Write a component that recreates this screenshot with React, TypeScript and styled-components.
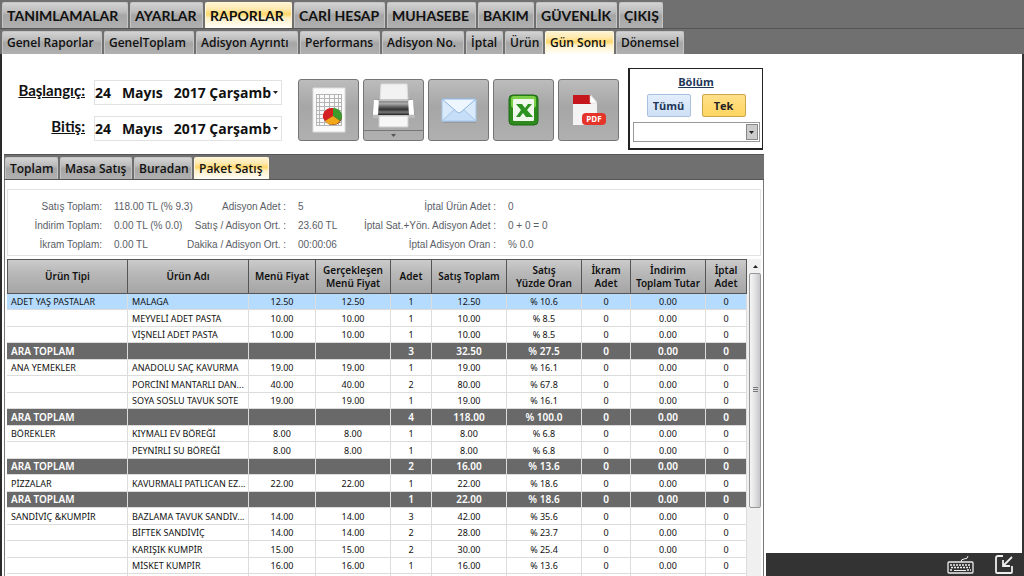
import React from "react";
import styled, { createGlobalStyle, css } from "styled-components";

const Global = createGlobalStyle`
  *, *::before, *::after { box-sizing: border-box; }
  body { margin: 0; background: #fff; font-family: "Open Sans", "Noto Sans", sans-serif; color: #111; }
  button, input, select { font: inherit; color: inherit; margin: 0; }
`;

const silver = "linear-gradient(#d3d3d3 0%, #bcbcbc 35%, #a6a6a6 50%, #b0b0b0 100%)";
const gold = "linear-gradient(#fff3d2 0%, #ffe9ae 25%, #ffd76a 45%, #fff0c4 60%, #fffefa 100%)";

const Page = styled.div`
  display: flex;
  flex-direction: column;
  height: 100vh;
  overflow: hidden;
`;

const TabBar = styled.nav<{ $level: "main" | "sub" | "inner" }>`
  display: flex;
  gap: 2px;
  background: #707070;
  font-weight: 600;
  white-space: nowrap;
  ${(p) =>
    p.$level === "main" &&
    css`
      height: 29px;
      padding: 2px 2px 0;
      border-bottom: 1px solid #555;
      font-family: Lato, sans-serif;
      font-size: 14px;
      font-weight: 700;
    `}
  ${(p) =>
    p.$level === "sub" &&
    css`
      height: 25px;
      padding: 2px 2px 0;
      font-size: 12px;
    `}
  ${(p) =>
    p.$level === "inner" &&
    css`
      height: 26px;
      padding: 2px 1px 0;
      border-top: 1px solid #555;
      border-bottom: 1px solid #555;
      font-size: 12px;
    `}
`;

const Tab = styled.button<{ $width: number; $active?: boolean }>`
  width: ${(p) => p.$width}px;
  height: 100%;
  padding: 0 0 0 4px;
  border: 1px solid ${(p) => (p.$active ? "#fff6dc" : "#c4c4c4")};
  border-bottom: 0;
  border-radius: 2px 2px 0 0;
  background: ${(p) => (p.$active ? gold : silver)};
  line-height: 20px;
  text-align: left;
`;

const Body = styled.div`
  flex: 1;
  min-height: 0;
  display: grid;
  grid-template-columns: minmax(0, 1fr) 258px;
`;

const Main = styled.main`
  display: flex;
  flex-direction: column;
  min-height: 0;
  padding: 0 2px;
  border-left: 2px solid #2a2a2a;
`;

const Aside = styled.aside`
  display: flex;
  flex-direction: column;
  justify-content: flex-end;
  border-right: 2px solid #333;
`;

const StatusBar = styled.footer`
  display: flex;
  justify-content: flex-end;
  align-items: center;
  gap: 20px;
  height: 23px;
  padding-right: 8px;
  background: #333;
`;

const IconButton = styled.button`
  display: flex;
  padding: 0;
  border: 0;
  background: none;
`;

const Filters = styled.section`
  display: flex;
  height: 100px;
  padding: 14px 1px 0 13px;
`;

const Dates = styled.div`
  display: grid;
  grid-template-columns: 68px 188px;
  grid-auto-rows: 25px;
  gap: 11px 9px;
  padding-top: 12px;
`;

const DateLabel = styled.label`
  font-family: Lato, sans-serif;
  font-size: 15px;
  font-weight: 700;
  line-height: 20px;
  text-align: right;
  text-decoration: underline;
`;

const DateBox = styled.div`
  display: flex;
  align-items: center;
  gap: 2px;
  border: 1px solid #e2e2e2;
  padding-right: 3px;
`;

const DateInput = styled.input`
  flex: 1;
  min-width: 0;
  height: 23px;
  padding: 0;
  border: 0;
  background: none;
  font-size: 14px;
  font-weight: 700;
  white-space: pre;
`;

const Tools = styled.div`
  display: flex;
  gap: 4px;
  padding: 11px 0 0 16px;
`;

const Tool = styled.button`
  display: flex;
  align-items: center;
  justify-content: center;
  width: 61px;
  height: 62px;
  padding: 0;
  border: 1px solid #757575;
  border-radius: 3px;
  background: linear-gradient(#bcbcbc, #a6a6a6 45%, #b0b0b0);
`;

const Section = styled.fieldset`
  display: grid;
  grid-template-columns: 44px 44px;
  grid-template-rows: 15px 23px 20px;
  justify-content: center;
  gap: 5px 11px;
  width: 135px;
  height: 82px;
  margin: 0 0 0 auto;
  padding: 5px 2px;
  border: 1px solid #222;
  border-left-width: 2px;
  border-bottom-width: 2px;
`;

const SectionTitle = styled.div`
  grid-column: 1 / -1;
  color: #1d3557;
  font-size: 11px;
  font-weight: 700;
  line-height: 16px;
  text-align: center;
  text-decoration: underline;
`;

const Choice = styled.button<{ $on?: boolean }>`
  padding: 0;
  border: 1px solid ${(p) => (p.$on ? "#c9a64e" : "#a9c1de")};
  border-radius: 2px;
  background: ${(p) => (p.$on ? "linear-gradient(#ffe08a, #ffd560)" : "linear-gradient(#e3eefb, #cfe0f5)")};
  color: ${(p) => (p.$on ? "#222" : "#1d3557")};
  font-size: 11px;
  font-weight: 700;
  line-height: 16px;
`;

const Combo = styled.div`
  display: grid;
  grid-template-columns: 1fr 12px;
  grid-column: 1 / -1;
  margin: 0 -14px;
  padding: 1px;
  border: 1px solid #999;
  align-items: center;
`;

const ComboSelect = styled.select`
  grid-area: 1 / 1 / 2 / 3;
  appearance: none;
  height: 16px;
  border: 0;
  background: none;
`;

const ComboArrow = styled.span`
  grid-area: 1 / 2;
  display: flex;
  align-items: center;
  justify-content: center;
  height: 16px;
  border: 1px solid #888;
  background: #ccc;
  pointer-events: none;
`;

const Report = styled.section`
  flex: 1;
  min-height: 0;
  display: flex;
  flex-direction: column;
  border: 1px solid #777;
  border-top: 0;
  border-bottom: 0;
  padding: 9px 2px 0;
`;

const Summary = styled.dl`
  display: grid;
  grid-template-columns: 94px 78px 98px 61px 141px 1fr;
  grid-auto-rows: 19px;
  column-gap: 4px;
  height: 67px;
  margin: 0 0 3px;
  padding: 7px 0 0;
  border: 1px solid #e2e2e2;
  color: #5a5e66;
  font-family: "Liberation Sans", Arial, sans-serif;
  font-size: 10px;
  line-height: 19px;
  white-space: nowrap;
`;

const Term = styled.dt`
  display: flex;
  justify-content: flex-end;
`;

const Value = styled.dd`
  margin: 0 0 0 8px;
`;

const TableArea = styled.div`
  flex: 1;
  min-height: 0;
  display: grid;
  grid-template-columns: minmax(0, 1fr) 14px;
  overflow: hidden;
`;

const Clip = styled.div`
  min-height: 0;
  overflow: hidden;
`;

const Table = styled.table`
  width: 100%;
  table-layout: fixed;
  border-collapse: separate;
  border-spacing: 0;
  font-family: "Noto Sans", "Open Sans", sans-serif;
  font-size: 9px;
`;

const HeadCell = styled.th`
  height: 35px;
  padding: 0;
  border: 1px solid #555;
  border-left-width: 0;
  background: linear-gradient(#cbcbcb, #b8b8b8 40%, #a5a5a5);
  font-size: 10px;
  font-weight: 600;
  line-height: 13px;
  white-space: pre-line;
  &:first-child { border-left-width: 1px; }
`;

const Row = styled.tr<{ $kind: "item" | "selected" | "total" }>`
  height: 16px;
  &:nth-child(even) { height: 17px; }
  ${(p) => p.$kind === "selected" && css`background: #b5dbff;`}
  ${(p) => p.$kind === "total" && css`
    background: #696969;
    color: #fff;
    font-weight: 600;
    font-size: 10px;
  `}
`;

const Cell = styled.td<{ $left?: boolean }>`
  padding: ${(p) => (p.$left ? "0 0 0 4px" : "0 4px")};
  border-right: 1px solid #dcdcdc;
  border-bottom: 1px solid #dcdcdc;
  line-height: 15px;
  text-align: ${(p) => (p.$left ? "left" : "center")};
  overflow: hidden;
  white-space: nowrap;
`;

const Scrollbar = styled.div`
  display: flex;
  flex-direction: column;
  align-items: center;
  padding-left: 2px;
  background: #f0f0f0;
`;

const ScrollUp = styled.button`
  display: flex;
  align-items: center;
  justify-content: center;
  width: 100%;
  height: 14px;
  padding: 0;
  border: 0;
  background: none;
`;

const Thumb = styled.div`
  display: flex;
  align-items: center;
  justify-content: center;
  width: 100%;
  height: 74%;
  border: 1px solid #979797;
  border-radius: 2px;
  background: linear-gradient(90deg, #f5f5f5, #e4e4e6 45%, #c6c6ca);
`;

const mainTabs: [string, number][] = [
  ["TANIMLAMALAR", 126], ["AYARLAR", 73], ["RAPORLAR", 87], ["CARİ HESAP", 91],
  ["MUHASEBE", 89], ["BAKIM", 56], ["GÜVENLİK", 81], ["ÇIKIŞ", 44],
];
const subTabs: [string, number][] = [
  ["Genel Raporlar", 100], ["GenelToplam", 90], ["Adisyon Ayrıntı", 102], ["Performans", 80],
  ["Adisyon No.", 82], ["İptal", 37], ["Ürün", 38], ["Gün Sonu", 69], ["Dönemsel", 68],
];
const innerTabs: [string, number][] = [
  ["Toplam", 53], ["Masa Satış", 72], ["Buradan", 58], ["Paket Satış", 75],
];

const summary = [
  ["Satış Toplam:", "118.00 TL (% 9.3)"], ["Adisyon Adet :", "5"], ["İptal Ürün Adet :", "0"],
  ["İndirim Toplam:", "0.00 TL (% 0.0)"], ["Satış / Adisyon Ort. :", "23.60 TL"], ["İptal Sat.+Yön. Adisyon Adet :", "0 + 0 = 0"],
  ["İkram Toplam:", "0.00 TL"], ["Dakika / Adisyon Ort. :", "00:00:06"], ["İptal Adisyon Oran :", "% 0.0"],
];

const columns: [string, number][] = [
  ["Ürün Tipi", 121], ["Ürün Adı", 121], ["Menü Fiyat", 67], ["Gerçekleşen\nMenü Fiyat", 75], ["Adet", 41],
  ["Satış Toplam", 75], ["Satış\nYüzde Oran", 75], ["İkram\nAdet", 49], ["İndirim\nToplam Tutar", 75], ["İptal\nAdet", 41],
];

type Line = { type?: string; name?: string; price?: string; count: string; sum: string; rate: string };

const lines: Line[] = [
  { type: "ADET YAŞ PASTALAR", name: "MALAGA", price: "12.50", count: "1", sum: "12.50", rate: "% 10.6" },
  { name: "MEYVELİ ADET PASTA", price: "10.00", count: "1", sum: "10.00", rate: "% 8.5" },
  { name: "VİŞNELİ ADET PASTA", price: "10.00", count: "1", sum: "10.00", rate: "% 8.5" },
  { type: "ARA TOPLAM", count: "3", sum: "32.50", rate: "% 27.5" },
  { type: "ANA YEMEKLER", name: "ANADOLU SAÇ KAVURMA", price: "19.00", count: "1", sum: "19.00", rate: "% 16.1" },
  { name: "PORCİNİ MANTARLI DAN...", price: "40.00", count: "2", sum: "80.00", rate: "% 67.8" },
  { name: "SOYA SOSLU TAVUK SOTE", price: "19.00", count: "1", sum: "19.00", rate: "% 16.1" },
  { type: "ARA TOPLAM", count: "4", sum: "118.00", rate: "% 100.0" },
  { type: "BÖREKLER", name: "KIYMALI EV BÖREĞİ", price: "8.00", count: "1", sum: "8.00", rate: "% 6.8" },
  { name: "PEYNİRLİ SU BÖREĞİ", price: "8.00", count: "1", sum: "8.00", rate: "% 6.8" },
  { type: "ARA TOPLAM", count: "2", sum: "16.00", rate: "% 13.6" },
  { type: "PİZZALAR", name: "KAVURMALI PATLICAN EZ...", price: "22.00", count: "1", sum: "22.00", rate: "% 18.6" },
  { type: "ARA TOPLAM", count: "1", sum: "22.00", rate: "% 18.6" },
  { type: "SANDİVİÇ &KUMPİR", name: "BAZLAMA TAVUK SANDİV...", price: "14.00", count: "3", sum: "42.00", rate: "% 35.6" },
  { name: "BİFTEK SANDİVİÇ", price: "14.00", count: "2", sum: "28.00", rate: "% 23.7" },
  { name: "KARIŞIK KUMPİR", price: "15.00", count: "2", sum: "30.00", rate: "% 25.4" },
  { name: "MİSKET KUMPİR", price: "16.00", count: "1", sum: "16.00", rate: "% 13.6" },
];

const Arrow = ({ up }: { up?: boolean }) => (
  <svg width="5" height="3" viewBox="0 0 5 3"><path d={up ? "M0 3 2.5 0 5 3z" : "M0 0h5L2.5 3z"} fill="#222" /></svg>
);

const ChartIcon = () => (
  <svg width="34" height="46" viewBox="0 0 34 46">
    <path d="M1 1h32v44H1z" fill="#fafafa" stroke="#ddd" />
    <path d="M4 7.500h26M4 11.500h26M4 15.500h26M4 19.500h26M4 23.500h26M4 27.500h26M4 31.500h26M4 35.500h26M4 38.500h26M4.500 7v31M7.500 7v31M12.500 7v31M17.500 7v31M22.500 7v31M26.500 7v31M29.500 7v31" stroke="#b5b5b5" fill="none" />
    <ellipse cx="21" cy="30" rx="9" ry="8" fill="#7a2a12" />
    <path d="M21 29 13 34A9 8 0 0 1 21 21z" fill="#d42020" />
    <path d="M21 29V21A9 8 0 0 1 28 34z" fill="#3f9a2c" />
    <path d="M21 29 28 34A9 8 0 0 1 13 34z" fill="#f3a81c" />
  </svg>
);

const PrinterIcon = () => (
  <svg width="59" height="60" viewBox="0 0 59 60">
    <defs>
      <linearGradient id="drum" x1="0" x2="0" y1="0" y2="1">
        <stop offset="0" stopColor="#888" /><stop offset=".2" stopColor="#aaa" /><stop offset=".4" stopColor="#666" /><stop offset=".6" stopColor="#333" /><stop offset=".8" stopColor="#777" /><stop offset="1" stopColor="#222" />
      </linearGradient>
    </defs>
    <path d="M17 4h26l1 17H16z" fill="#f2f2f2" stroke="#ddd" />
    <path d="M11 20h37l3 16H8z" fill="#ececec" stroke="#999" />
    <path d="M15 21h29l1 14H14z" fill="url(#drum)" />
    <path d="M10 20h4v14H9zM45 20h4l1 14h-5z" fill="#fff" />
    <path d="M9 35h42v3H9z" fill="#bbb" />
    <path d="M15 36h29v11H15z" fill="#f7f7f7" stroke="#ccc" />
    <path d="M0 50.500h59" stroke="#777" />
    <path d="M27 54h5l-2.500 3z" fill="#555" />
  </svg>
);

const MailIcon = () => (
  <svg width="36" height="26" viewBox="0 0 36 26">
    <path d="M2 24h33v2H2z" fill="#888" opacity=".5" />
    <path d="M1 2h34v22H1z" fill="#d9eafb" stroke="#a7c5e6" />
    <path d="M1 24 14 12h8l13 12z" fill="#c6def7" stroke="#a5c6ea" />
    <path d="M1 2h34L20 15q-2 2-4 0z" fill="#eef7ff" stroke="#8fb4dd" />
  </svg>
);

const ExcelIcon = () => (
  <svg width="32" height="34" viewBox="0 0 32 34">
    <rect x="1" y="2" width="29" height="30" rx="4" fill="#2f8a1e" stroke="#1c6b12" />
    <rect x="3" y="3" width="25" height="12" rx="3" fill="#7ed04a" />
    <rect x="5" y="6" width="21" height="22" rx="1" fill="#f1f8ec" />
    <path d="M8 11h6l3 4 3-4h4l-5 6 6 7h-7l-3-4-3 4H8l5-7z" fill="#2c9320" />
  </svg>
);

const PdfIcon = () => (
  <svg width="36" height="34" viewBox="0 0 36 34">
    <path d="M2 2h18l6 7v23H2z" fill="#f3f3f3" />
    <path d="M2 2h18v9H2z" fill="#c4161c" />
    <path d="M19 2l7 8h-7z" fill="#fff" stroke="#ccc" strokeWidth=".5" />
    <rect x="11" y="20" width="24" height="12" rx="4" fill="#e5352b" />
    <text x="23" y="29" textAnchor="middle" fill="#fff" fontSize="8" fontWeight="700" fontFamily="Open Sans, sans-serif">PDF</text>
  </svg>
);

const KeyboardIcon = () => (
  <svg width="28" height="18" viewBox="0 0 28 18" fill="none" stroke="#eee">
    <rect x="1" y="6" width="25" height="11" rx="1" strokeWidth="1.300" />
    <path d="M14 6q0-3 3-3 4 0 4-3" />
    <path d="M3 9h21M4 11.500h19M3 14h3M20 14h4" strokeWidth="1.500" strokeDasharray="2 1" />
    <path d="M7 14.500h12" />
  </svg>
);

const DockIcon = () => (
  <svg width="19" height="19" viewBox="0 0 19 19" fill="none" stroke="#eee" strokeWidth="1.800">
    <path d="M8 1H3Q1 1 1 3v14q0 1 1 1h14q1 0 1-1v-6" />
    <path d="M17 2 8 11M8 5v6h7" />
  </svg>
);

const Tabs = ({ level, tabs, active }: { level: "main" | "sub" | "inner"; tabs: [string, number][]; active: string }) => (
  <TabBar $level={level}>
    {tabs.map(([name, width]) => (
      <Tab key={name} $width={width} $active={name === active}>{name}</Tab>
    ))}
  </TabBar>
);

const DateField = ({ id, label }: { id: string; label: string }) => (
  <>
    <DateLabel htmlFor={id}>{label}</DateLabel>
    <DateBox>
      <DateInput id={id} defaultValue="24   Mayıs   2017 Çarşamba" />
      <Arrow />
    </DateBox>
  </>
);

export default function App() {
  return (
    <Page lang="tr">
      <Global />
      <Tabs level="main" tabs={mainTabs} active="RAPORLAR" />
      <Tabs level="sub" tabs={subTabs} active="Gün Sonu" />
      <Body>
        <Main>
          <Filters>
            <Dates>
              <DateField id="start" label="Başlangıç:" />
              <DateField id="end" label="Bitiş:" />
            </Dates>
            <Tools>
              <Tool aria-label="Grafik"><ChartIcon /></Tool>
              <Tool aria-label="Yazdır"><PrinterIcon /></Tool>
              <Tool aria-label="E-posta"><MailIcon /></Tool>
              <Tool aria-label="Excel"><ExcelIcon /></Tool>
              <Tool aria-label="PDF"><PdfIcon /></Tool>
            </Tools>
            <Section aria-labelledby="section-title">
              <SectionTitle id="section-title">Bölüm</SectionTitle>
              <Choice>Tümü</Choice>
              <Choice $on>Tek</Choice>
              <Combo>
                <ComboSelect aria-label="Bölüm"><option value="" /></ComboSelect>
                <ComboArrow><Arrow /></ComboArrow>
              </Combo>
            </Section>
          </Filters>
          <Tabs level="inner" tabs={innerTabs} active="Paket Satış" />
          <Report>
            <Summary>
              {summary.map(([term, value]) => (
                <React.Fragment key={term}>
                  <Term>{term}</Term>
                  <Value>{value}</Value>
                </React.Fragment>
              ))}
            </Summary>
            <TableArea>
              <Clip>
                <Table>
                  <colgroup>
                    {columns.map(([name, width]) => <col key={name} style={{ width }} />)}
                  </colgroup>
                  <thead>
                    <tr>{columns.map(([name]) => <HeadCell key={name}>{name}</HeadCell>)}</tr>
                  </thead>
                  <tbody>
                    {lines.map((l, i) => (
                      <Row key={i} $kind={i === 0 ? "selected" : l.name ? "item" : "total"}>
                        <Cell $left>{l.type}</Cell>
                        <Cell $left>{l.name}</Cell>
                        <Cell>{l.price}</Cell>
                        <Cell>{l.price}</Cell>
                        <Cell>{l.count}</Cell>
                        <Cell>{l.sum}</Cell>
                        <Cell>{l.rate}</Cell>
                        <Cell>0</Cell>
                        <Cell>0.00</Cell>
                        <Cell>0</Cell>
                      </Row>
                    ))}
                    <Row $kind="item">{columns.map(([name]) => <Cell key={name} />)}</Row>
                  </tbody>
                </Table>
              </Clip>
              <Scrollbar>
                <ScrollUp aria-label="Yukarı"><Arrow up /></ScrollUp>
                <Thumb>
                  <svg width="5" height="6" viewBox="0 0 5 6"><path d="M0 .5h5M0 2.500h5M0 4.500h5" stroke="#777" /></svg>
                </Thumb>
              </Scrollbar>
            </TableArea>
          </Report>
        </Main>
        <Aside>
          <StatusBar>
            <IconButton aria-label="Klavye"><KeyboardIcon /></IconButton>
            <IconButton aria-label="Küçült"><DockIcon /></IconButton>
          </StatusBar>
        </Aside>
      </Body>
    </Page>
  );
}
